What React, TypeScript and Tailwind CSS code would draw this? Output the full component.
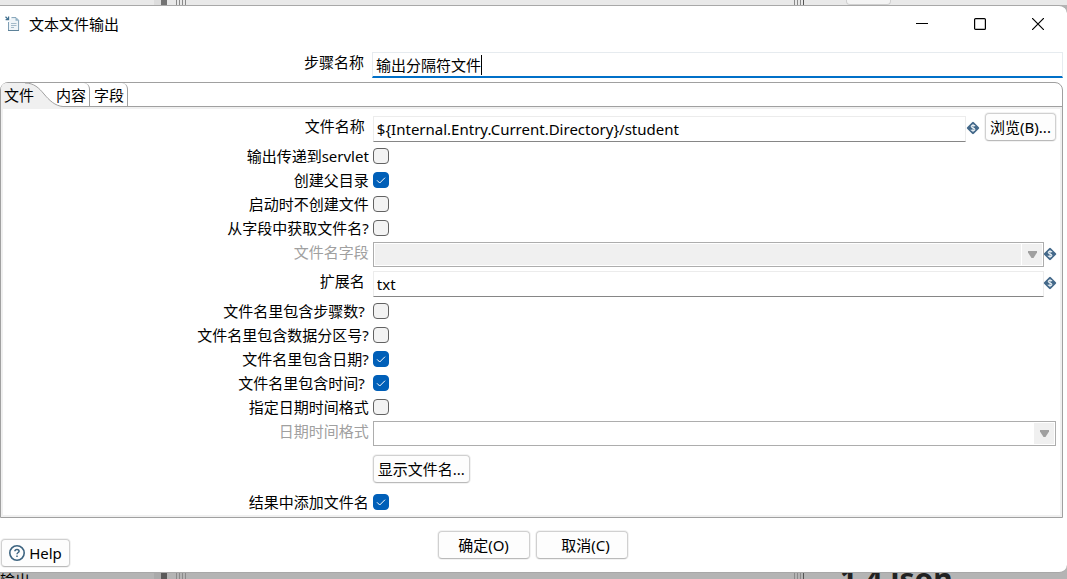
import { ReactNode, useState } from "react";
import { clsx } from "clsx";

const inputClass =
  "block h-[26px] w-full min-w-0 border border-[#ececec] border-b-[#868686] bg-white pl-[3px] pr-1 outline-none";

const DocumentIcon = () => (
  <svg className="h-4 w-4 shrink-0" viewBox="0 0 16 16" fill="none">
    <path d="M0.5 0.8l2.6 2.4M3.6 0.5v3.1H0.6" stroke="#3f6f8f" strokeWidth="1.2" />
    <path
      d="M6.5 1.6H11l2.6 2.6v10.3H3.5V6"
      stroke="#7f9fb5"
      fill="#eef4f8"
    />
    <path d="M10.5 1.3v3.4h3.3z" fill="#8fb0c4" />
    <path d="M6 7.5h5.5M6 9.5h5.5M6 11.5h3" stroke="#a3bac9" />
    <path d="M3 14.5h11" stroke="#5d8299" />
  </svg>
);

const VariableIcon = () => (
  <svg className="h-3 w-3 shrink-0 overflow-visible" viewBox="0 0 12 12">
    <path
      d="M6 1l5 5-5 5-5-5z"
      fill="#44698a"
      stroke="#44698a"
      strokeWidth="2.4"
      strokeLinejoin="round"
    />
    <path
      d="M8 4.3C7.5 2.9 4.2 3 4.2 4.6c0 1.700 3.700 1 3.700 2.800 0 1.700-3.500 1.700-4 .2M6 2v8"
      fill="none"
      stroke="#e6edf2"
      strokeWidth="1.1"
    />
  </svg>
);

const HelpIcon = () => (
  <svg className="h-4 w-4 shrink-0" viewBox="0 0 16 16" fill="none">
    <circle cx="8" cy="8" r="7.2" stroke="#3d6480" strokeWidth="1.6" />
    <path
      d="M5.9 6.3c0-2.6 4.2-2.5 4.2-.1C10.1 7.5 8 7.6 8 9.3"
      stroke="#3d6480"
      strokeWidth="1.5"
    />
    <path d="M8 10.4V12" stroke="#3d6480" strokeWidth="1.5" />
  </svg>
);

const PushButton = ({
  children,
  className,
}: {
  children: ReactNode;
  className?: string;
}) => (
  <button
    type="button"
    className={clsx(
      "flex h-7 shrink-0 items-center justify-center rounded border border-[#d0d0d0] border-b-[#bababa] bg-[#fdfdfd] whitespace-nowrap ring-1 ring-[#f2f2f2] hover:bg-[#eef6fc]",
      className
    )}
  >
    {children}
  </button>
);

const Row = ({
  id,
  label,
  disabled,
  className,
  children,
}: {
  id: string;
  label: string;
  disabled?: boolean;
  className?: string;
  children: ReactNode;
}) => (
  <div className={clsx("flex items-start", className)}>
    <label
      htmlFor={id}
      className={clsx(
        "w-[35%] shrink-0 text-right leading-5",
        disabled ? "pr-1 text-[#a0a0a0]" : "pr-2"
      )}
    >
      {label}
    </label>
    {children}
  </div>
);

const CheckRow = ({
  id,
  label,
  checked: initial = false,
  wide = false,
}: {
  id: string;
  label: string;
  checked?: boolean;
  wide?: boolean;
}) => {
  const [checked, setChecked] = useState(initial);

  return (
    <div className="flex h-6 items-center">
      <label
        htmlFor={id}
        className={clsx("w-[35%] shrink-0 text-right", wide ? "pr-2" : "pr-1")}
      >
        {label}
      </label>
      <span className="relative h-4 w-4">
        <input
          id={id}
          type="checkbox"
          checked={checked}
          onChange={(e) => setChecked(e.target.checked)}
          className="block h-4 w-4 appearance-none rounded border border-[#626262] bg-[#f3f3f3] checked:border-[#005fb8] checked:bg-[#005fb8]"
        />
        {checked && (
          <svg
            className="pointer-events-none absolute inset-0 h-4 w-4"
            viewBox="0 0 16 16"
            fill="none"
          >
            <path d="M4 8.3L6.7 11 12 5.7" stroke="#fff" />
          </svg>
        )}
      </span>
    </div>
  );
};

const Combo = ({ id, filled }: { id: string; filled?: boolean }) => (
  <div className="relative min-w-0 flex-1">
    <select
      id={id}
      disabled
      className={clsx(
        "block h-[25px] w-full appearance-none border border-[#adadad] opacity-100 ring-1 ring-inset ring-white",
        filled ? "bg-[#f0f0f0]" : "bg-white"
      )}
    />
    <span className="pointer-events-none absolute inset-y-[2px] right-[2px] flex w-5 items-center justify-center bg-[#f0f0f0] outline outline-white">
      <svg className="h-2 w-[9px]" viewBox="0 0 9 8">
        <path d="M0 0h9v1.5L5.5 7h-2L0 1.5z" fill="#a0a0a0" />
      </svg>
    </span>
  </div>
);

/* Splitter handles of the workspace that show above and below the dialog */
const Workspace = ({
  className,
  left,
  right,
}: {
  className: string;
  left?: ReactNode;
  right?: ReactNode;
}) => (
  <div className={clsx("flex shrink-0 overflow-hidden", className)}>
    <div className="w-[154px] shrink-0">{left}</div>
    <div className="w-[7px] shrink-0 bg-black/5" />
    <div className="w-[6px] shrink-0 bg-black/50" />
    <div className="ml-[9px] w-3 shrink-0 bg-[repeating-linear-gradient(90deg,#8a8a8a_0_1px,transparent_1px_3px)]" />
    <div className="flex-1" />
    <div className="w-[9px] shrink-0 bg-[repeating-linear-gradient(90deg,#8a8a8a_0_1px,transparent_1px_3px)]" />
    <div className="w-px shrink-0 bg-[#555]" />
    <div className="w-[263px] shrink-0">{right}</div>
  </div>
);

const TitleBar = () => (
  <header className="flex h-9 items-center pl-[5px]">
    <DocumentIcon />
    <h1 className="ml-2 flex-1">文本文件输出</h1>
    <button
      type="button"
      aria-label="最小化"
      className="flex h-9 w-[58px] items-center justify-center"
    >
      <svg className="h-3 w-3" viewBox="0 0 12 12">
        <path d="M0 5.5h12" stroke="#000" />
      </svg>
    </button>
    <button
      type="button"
      aria-label="最大化"
      className="flex h-9 w-[58px] items-center justify-center"
    >
      <svg className="h-3 w-3" viewBox="0 0 12 12">
        <rect
          x="0.6"
          y="0.6"
          width="10.8"
          height="10.8"
          rx="1"
          fill="none"
          stroke="#000"
          strokeWidth="1.2"
        />
      </svg>
    </button>
    <button
      type="button"
      aria-label="关闭"
      className="flex h-9 w-[58px] items-center justify-center"
    >
      <svg className="h-3 w-3" viewBox="0 0 12 12">
        <path d="M0 0l12 12M12 0L0 12" stroke="#000" strokeWidth="1.2" />
      </svg>
    </button>
  </header>
);

const Tabs = () => (
  <div role="tablist" className="flex h-6 border-b border-[#a0a0a0]">
    <button
      type="button"
      role="tab"
      aria-selected="true"
      className="relative h-6 w-[52px] shrink-0 pl-[3px] text-left"
    >
      <svg
        className="absolute top-0 left-0 h-6 w-[64px]"
        viewBox="0 0 64 24"
        fill="none"
      >
        <path
          d="M0 24V5Q1 0 6 0h18c9 0 14 5 19 11s11 12 19 12.5V24z"
          fill="#f0f0f0"
        />
        <path d="M24 0c9 0 14 5 19 11s11 12 19 12.5" stroke="#a0a0a0" />
      </svg>
      <span className="relative">文件</span>
    </button>
    <button
      type="button"
      role="tab"
      aria-selected="false"
      className="h-6 w-[37px] shrink-0 rounded-tr-md border-r border-[#a0a0a0] pr-[3px] text-right"
    >
      内容
    </button>
    <button
      type="button"
      role="tab"
      aria-selected="false"
      className="h-6 w-[38px] shrink-0 rounded-tr-md border-r border-[#a0a0a0] pr-[3px] text-right"
    >
      字段
    </button>
  </div>
);

const FilePanel = () => (
  <div
    role="tabpanel"
    className="border-2 border-[#f0f0f0] pt-[7px] pr-1 pb-px pl-[2px]"
  >
    <Row id="filename" label="文件名称" className="mb-[2px]">
      <input
        id="filename"
        type="text"
        defaultValue="${Internal.Entry.Current.Directory}/student"
        className={clsx(inputClass, "flex-1")}
      />
      <span className="mt-[6px] ml-px">
        <VariableIcon />
      </span>
      <PushButton className="-mt-[3px] ml-[6px] w-[71px]">浏览(B)...</PushButton>
    </Row>

    <CheckRow id="servlet" label="输出传递到servlet" />
    <CheckRow id="parent" label="创建父目录" checked />
    <CheckRow id="nocreate" label="启动时不创建文件" />
    <CheckRow id="fromfield" label="从字段中获取文件名?" />

    <Row id="field" label="文件名字段" disabled className="mt-[2px]">
      <Combo id="field" filled />
      <span className="mt-[6px]">
        <VariableIcon />
      </span>
    </Row>
    <Row id="extension" label="扩展名" className="mt-1 mb-[2px]">
      <input
        id="extension"
        type="text"
        defaultValue="txt"
        className={clsx(inputClass, "flex-1")}
      />
      <span className="mt-[6px]">
        <VariableIcon />
      </span>
    </Row>

    <CheckRow id="stepnr" label="文件名里包含步骤数?" wide />
    <CheckRow id="partnr" label="文件名里包含数据分区号?" />
    <CheckRow id="date" label="文件名里包含日期?" checked />
    <CheckRow id="time" label="文件名里包含时间?" checked wide />
    <CheckRow id="specify" label="指定日期时间格式" />

    <Row id="format" label="日期时间格式" disabled className="mt-[2px]">
      <Combo id="format" />
    </Row>
    <div className="mt-[9px] mb-[7px] flex">
      <div className="w-[35%] shrink-0" />
      <PushButton className="w-[97px]">显示文件名...</PushButton>
    </div>
    <CheckRow id="addresult" label="结果中添加文件名" checked />
  </div>
);

export default function App() {
  const [stepName, setStepName] = useState("输出分隔符文件");

  return (
    <div className="flex min-h-screen flex-col bg-[#b4b4b4] font-['Noto_Sans','Noto_Sans_CJK_SC',sans-serif] text-[15px] leading-5 text-black">
      <Workspace
        className="h-[5px] bg-[#e9e9e9]"
        right={
          <div className="ml-[42px] h-[5px] w-[45px] rounded-b border border-t-0 border-[#d0d0d0] bg-[#f4f4f4]" />
        }
      />

      <main className="flex flex-1 flex-col rounded-r-lg border-y border-[#a8a8a8] bg-white">
        <TitleBar />

        <div className="mt-[10px] mr-1 flex items-start">
          <label
            htmlFor="stepname"
            className="w-[35%] shrink-0 pr-2 text-right leading-5"
          >
            步骤名称
          </label>
          <div className="relative flex-1">
            <input
              id="stepname"
              type="text"
              value={stepName}
              onChange={(e) => setStepName(e.target.value)}
              className="block h-[26px] w-full border border-b-2 border-[#e6ebef] border-b-[#0070c8] bg-white pl-[3px] outline-none"
            />
            {/* text cursor */}
            <span className="absolute top-[3px] left-[109px] h-5 w-px bg-black" />
          </div>
        </div>

        <section className="mt-1 mr-1 rounded-t-lg border border-[#a0a0a0]">
          <Tabs />
          <FilePanel />
        </section>

        <footer className="grid flex-1 grid-cols-[1fr_auto_1fr] pr-[2px] pb-[5px]">
          <div className="flex items-end pl-px">
            <PushButton className="w-[69px] gap-1">
              <HelpIcon />
              Help
            </PushButton>
          </div>
          <div className="flex gap-[6px] pt-[13px]">
            <PushButton className="w-[92px]">确定(O)</PushButton>
            <PushButton className="w-[92px] pl-2">取消(C)</PushButton>
          </div>
          <div />
        </footer>
      </main>

      <Workspace
        className="h-[6px] bg-[#b4b4b4]"
        left={<span className="-mt-px block leading-4">输出</span>}
        right={
          <span className="-mt-2 block pl-9 text-[30px] leading-[28px] font-bold text-[#222]">
            1.4 json
          </span>
        }
      />
    </div>
  );
}
